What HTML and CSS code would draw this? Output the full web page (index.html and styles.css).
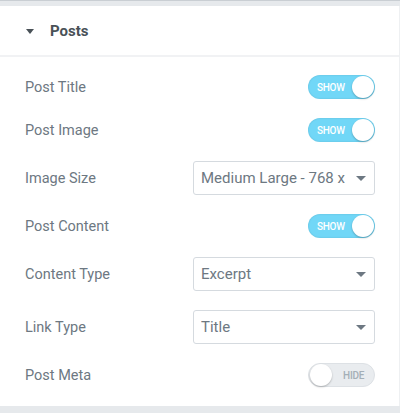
FILE: index.html
```html
<!DOCTYPE html>
<html lang="en">
<head>
  <meta charset="UTF-8">
  <title>Posts</title>
  <link rel="stylesheet" href="styles.css">
</head>
<body>
  <div class="panel">
    <div class="section-head">
      <span class="caret"></span>
      <h2>Posts</h2>
    </div>

    <div class="section-body">
      <div class="row">
        <span class="label">Post Title</span>
        <span class="switch on"><span class="switch-text">SHOW</span><span class="knob"></span></span>
      </div>
      <div class="row">
        <span class="label">Post Image</span>
        <span class="switch on"><span class="switch-text">SHOW</span><span class="knob"></span></span>
      </div>
      <div class="row select-row">
        <span class="label">Image Size</span>
        <div class="select"><span class="select-value">Medium Large - 768 x 0</span><span class="arrow"></span></div>
      </div>
      <div class="row">
        <span class="label">Post Content</span>
        <span class="switch on"><span class="switch-text">SHOW</span><span class="knob"></span></span>
      </div>
      <div class="row select-row">
        <span class="label">Content Type</span>
        <div class="select"><span class="select-value">Excerpt</span><span class="arrow"></span></div>
      </div>
      <div class="row select-row">
        <span class="label">Link Type</span>
        <div class="select"><span class="select-value">Title</span><span class="arrow"></span></div>
      </div>
      <div class="row">
        <span class="label">Post Meta</span>
        <span class="switch off"><span class="knob"></span><span class="switch-text">HIDE</span></span>
      </div>
    </div>
  </div>
</body>
</html>
```

FILE: styles.css
```css
/* panel de controles estilo editor */
body {
  margin: 0;
  font-family: Roboto, "Liberation Sans", sans-serif;
  background: #e6e9ec;
  border-top: 1px solid #c9ced3;
}
.panel {
  margin-top: 5px;
  background: #fff;
  border-right: 1px solid #eef0f2;
}
.section-head {
  display: flex;
  align-items: center;
  height: 49px;
  padding-left: 26px;
  border-bottom: 2px solid #f1f2f4;
}
.caret {
  width: 0;
  height: 0;
  border-left: 4px solid transparent;
  border-right: 4px solid transparent;
  border-top: 5px solid #495157;
  margin-right: 16px;
  margin-top: 1px;
}
.section-head h2 {
  margin: 0;
  font-size: 15px;
  font-weight: 700;
  color: #495157;
}
.section-body {
  display: flex;
  flex-direction: column;
  gap: 19px;
  padding: 18px 24px 19px 25px;
}
.row {
  display: flex;
  align-items: center;
  justify-content: space-between;
  height: 24px;
}
.select-row {
  height: 34px;
}
.label {
  font-size: 14.5px;
  color: #6d7882;
}
/* interruptor */
.switch {
  display: flex;
  align-items: center;
  box-sizing: border-box;
  width: 67px;
  height: 24px;
  border-radius: 12px;
  padding: 0 1px;
}
.switch.on {
  background: #71d7f7;
  box-shadow: inset 0 0 2px rgba(0,0,0,0.15);
  justify-content: space-between;
}
.switch.off {
  background: #e9ecef;
  border: 1px solid #dde1e5;
  justify-content: space-between;
}
.switch-text {
  font-size: 10px;
  font-weight: 500;
  letter-spacing: -0.3px;
}
.switch.on .switch-text {
  color: #fff;
  margin-left: 8px;
}
.switch.off .switch-text {
  color: #a4afb7;
  margin-right: 9px;
}
.knob {
  width: 22px;
  height: 22px;
  border-radius: 50%;
  background: #fff;
  box-shadow: 0 1px 2px rgba(0,0,0,0.25);
}
/* select */
.select {
  display: flex;
  align-items: center;
  box-sizing: border-box;
  width: 182px;
  height: 34px;
  border: 1px solid #d5dadf;
  border-radius: 3px;
  padding: 0 8px 0 7px;
}
.select-value {
  flex: 1;
  font-size: 15px;
  color: #6d7882;
  white-space: nowrap;
  overflow: hidden;
  margin-right: 10px;
}
.arrow {
  width: 0;
  height: 0;
  border-left: 5px solid transparent;
  border-right: 5px solid transparent;
  border-top: 5px solid #6d7882;
}
```
